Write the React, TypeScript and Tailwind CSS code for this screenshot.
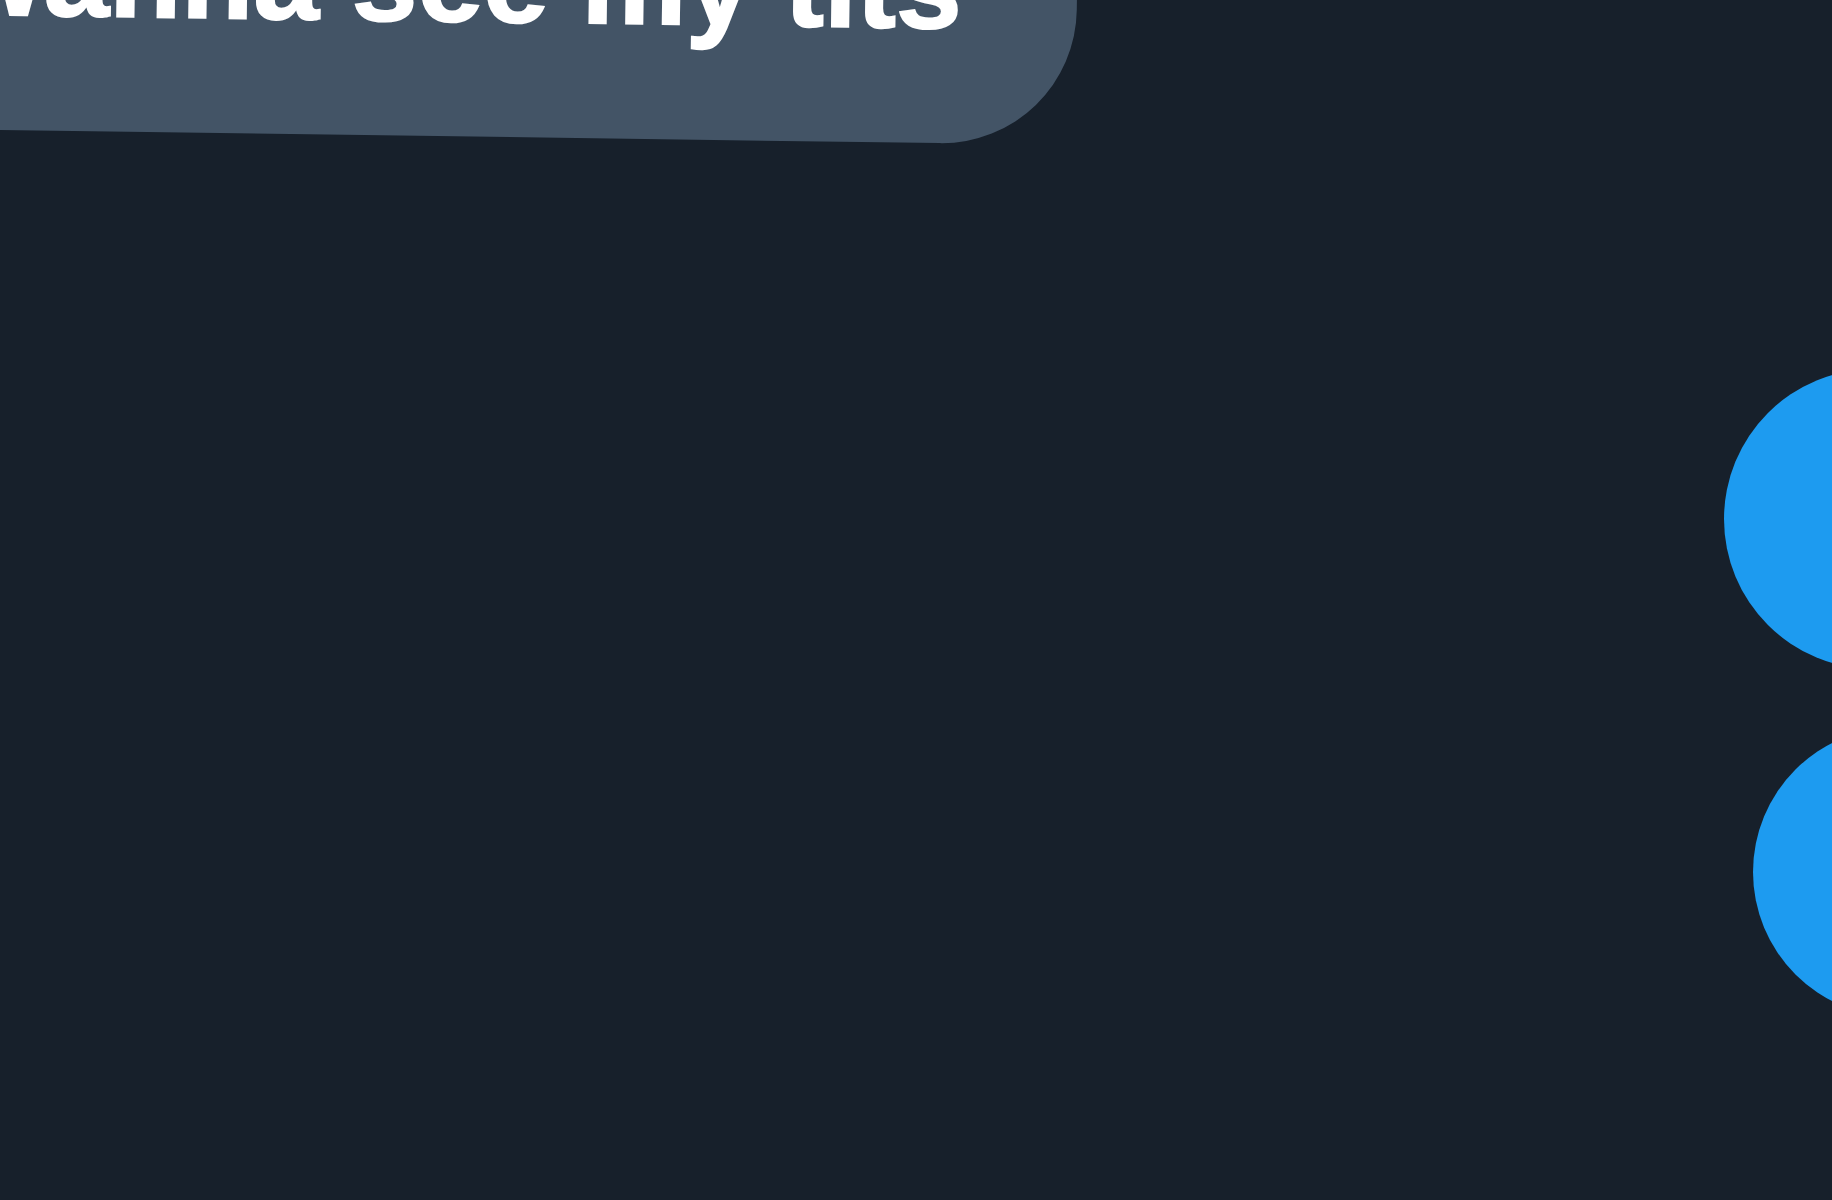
export default function App() {
  return (
    <div className="relative h-[1200px] w-full overflow-hidden bg-[#17202b]">
      {/* message bubble, cropped at the top-left */}
      <div className="-ml-[200px] -mt-[200px] h-[330px] w-[1275px] origin-[200px_330px] rotate-[0.8deg] rounded-br-[135px] bg-[#435466] pl-[150px] pt-[115px]">
        <p className="whitespace-nowrap font-['Liberation_Sans',sans-serif] text-[118px] font-bold leading-none text-white [-webkit-text-stroke:2px_white]">
          wanna see my tits
        </p>
      </div>

      {/* blue avatars / buttons at the right edge */}
      <div className="ml-[1724px] mt-[239px] size-[300px] rounded-full bg-[#1d9bf0] blur-[0.6px]" />
      <div className="ml-[1753px] mt-[58px] size-[290px] rounded-full bg-[#1d9bf0] blur-[0.6px]" />
    </div>
  );
}
